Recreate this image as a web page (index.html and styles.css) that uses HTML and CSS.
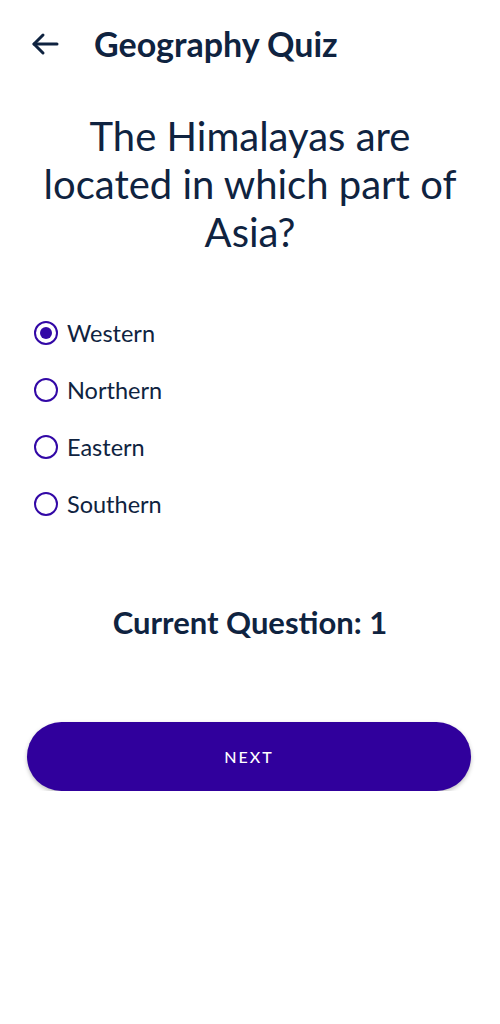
FILE: index.html
```html
<!DOCTYPE html>
<html>
<head>
<meta charset="utf-8">
<link rel="stylesheet" href="styles.css">
</head>
<body>
<div class="app">
  <header class="topbar">
    <svg class="back" width="28" height="24" viewBox="0 0 28 24" fill="none" stroke="#0f2340" stroke-width="3" stroke-linecap="round" stroke-linejoin="round">
      <path d="M26 12H3"/>
      <path d="M12 3L3 12L12 21"/>
    </svg>
    <h1 class="title">Geography Quiz</h1>
  </header>
  <h2 class="question">The Himalayas are located in which part of Asia?</h2>
  <div class="options">
    <label class="option"><span class="radio checked"></span><span class="label">Western</span></label>
    <label class="option"><span class="radio"></span><span class="label">Northern</span></label>
    <label class="option"><span class="radio"></span><span class="label">Eastern</span></label>
    <label class="option"><span class="radio"></span><span class="label">Southern</span></label>
  </div>
  <div class="current">Current Question: 1</div>
  <button class="next">NEXT</button>
</div>
</body>
</html>
```
FILE: styles.css
```css
* { box-sizing: border-box; }
html, body { margin: 0; padding: 0; background: #fff; }
body { font-family: Lato, "Noto Sans", sans-serif; color: #0f2340; }
.app { width: 500px; display: flex; flex-direction: column; }
.topbar { height: 88px; display: flex; align-items: center; padding-left: 31px; }
.back { display: block; }
.title { margin: 0 0 0 35px; font-size: 34px; font-weight: 700; line-height: 40px; }
.question { margin: 24px 40px 0; text-align: center; font-size: 40px; font-weight: 400; line-height: 48px; }
.options { display: flex; flex-direction: column; padding-left: 34px; margin-top: 48px; }
.option { height: 57px; display: flex; align-items: center; gap: 9px; }
.radio { width: 24px; height: 24px; border: 2px solid #3208a6; border-radius: 50%; display: flex; align-items: center; justify-content: center; }
.radio.checked::after { content: ""; width: 12px; height: 12px; border-radius: 50%; background: #3208a6; }
.label { font-size: 23.5px; }
.current { margin-top: 72px; text-align: center; font-size: 31px; font-weight: 700; line-height: 37px; }
.next { margin: 81px 29px 0 27px; height: 69px; border: none; border-radius: 35px; background: #30009c; color: #fff; font-family: Lato, "Noto Sans", sans-serif; font-size: 16px; font-weight: 500; letter-spacing: 2px; box-shadow: 0 2px 4px rgba(0,0,0,0.25); }
```
